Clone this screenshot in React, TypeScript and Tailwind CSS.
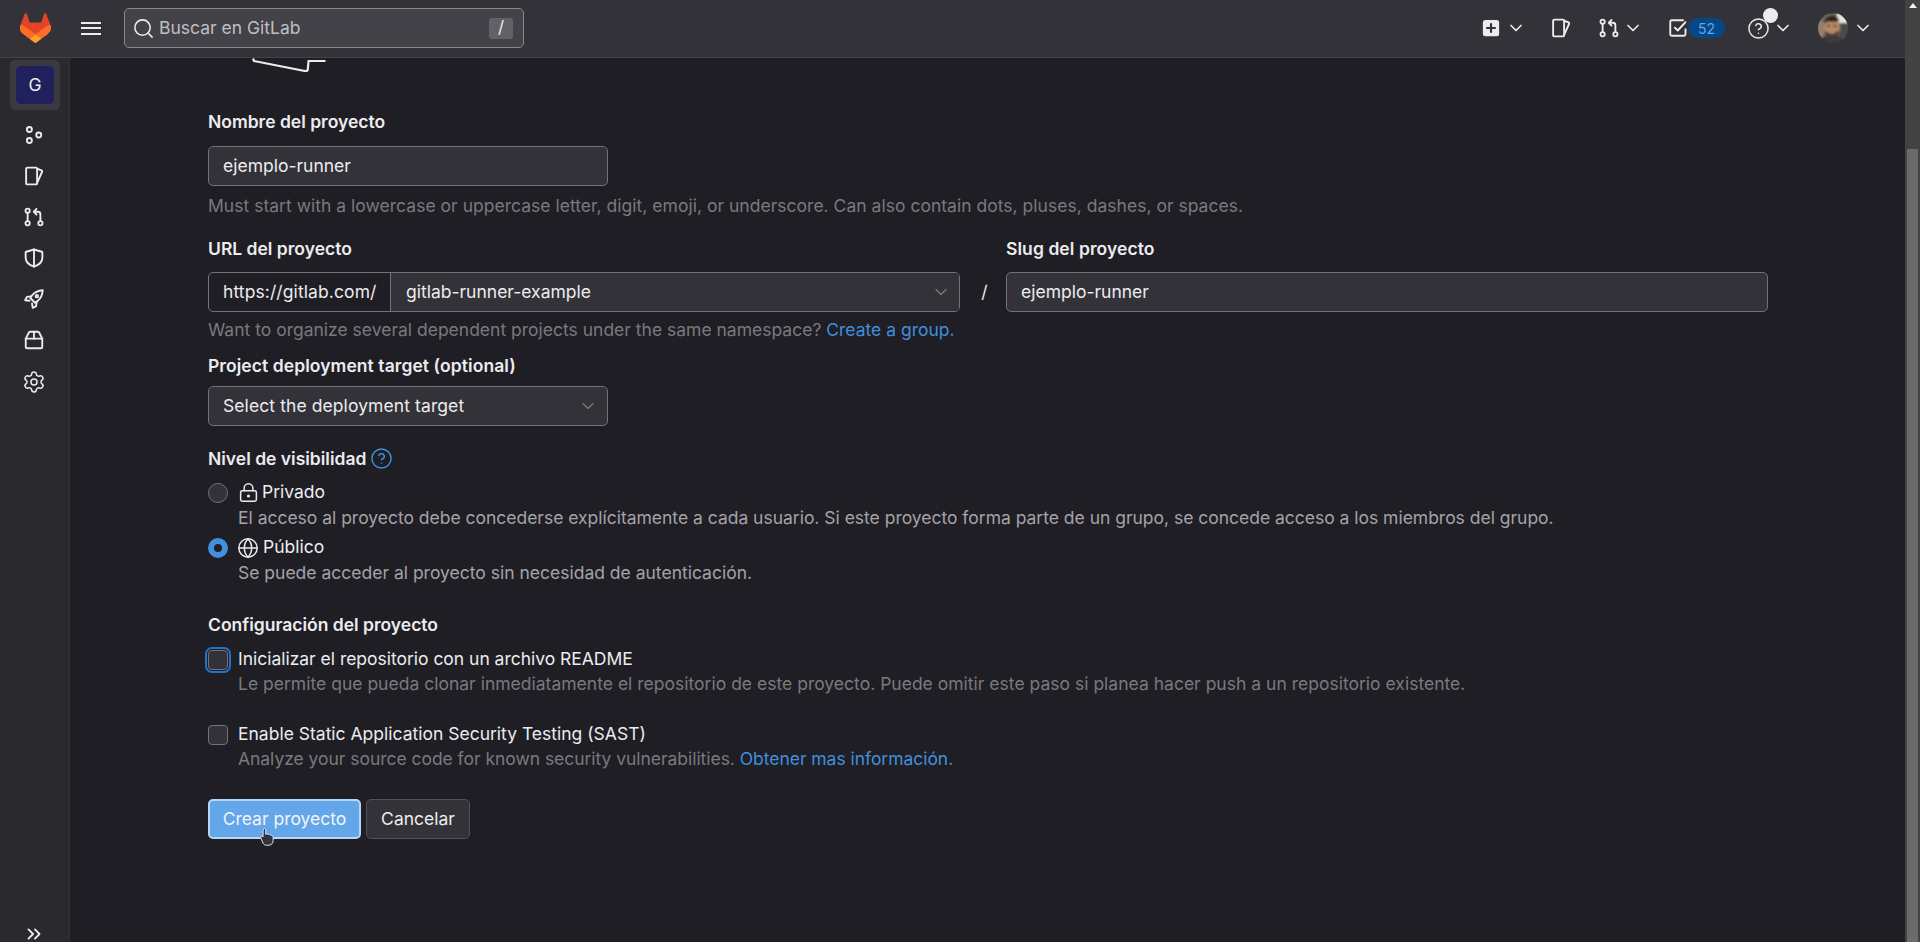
import { ChevronDown, ChevronsRight, CircleHelp, Globe, LockKeyhole, Search, Settings } from "lucide-react";
import type { ReactNode } from "react";

function Icon({ children, className = "" }: { children: ReactNode; className?: string }) {
  return (
    <svg
      viewBox="0 0 16 16"
      fill="none"
      stroke="currentColor"
      strokeWidth="1.5"
      strokeLinecap="round"
      strokeLinejoin="round"
      className={`h-5 w-5 shrink-0 ${className}`}
    >
      {children}
    </svg>
  );
}

const GroupIcon = () => (
  <Icon>
    <circle cx="4.3" cy="3.6" r="2" />
    <circle cx="4.3" cy="12.4" r="2" />
    <circle cx="11.8" cy="8" r="2" />
  </Icon>
);

const IssuesIcon = () => (
  <Icon>
    <path d="M2.700 1.300h6.800c.6 0 1 .4 1 1v11.400c0 .6-.4 1-1 1H2.700c-.6 0-1-.4-1-1V2.300c0-.6.4-1 1-1Z" />
    <path d="M10.500 2.200l3.500 1.300c.5.200.7.600.5 1.100l-4 8.900" />
  </Icon>
);

const MergeIcon = () => (
  <Icon>
    <circle cx="2.900" cy="3" r="1.700" />
    <circle cx="2.900" cy="13" r="1.700" />
    <circle cx="13.100" cy="13" r="1.700" />
    <path d="M2.900 4.700v6.600" />
    <path d="M13.100 11.300V5.800c0-1.200-.8-2-2-2H8.400" />
    <path d="M10 1.500 7.900 3.800 10 6.100" />
  </Icon>
);

const ShieldIcon = () => (
  <Icon>
    <path d="M8 1.200 14.200 3c.3.100.5.300.5.600v3.900c0 3.100-2.700 6-6.700 7.300-4-1.300-6.700-4.200-6.700-7.300V3.600c0-.3.200-.5.500-.6Z" />
    <path d="M8 1.200v13.600" />
  </Icon>
);

const RocketIcon = () => (
  <Icon>
    <path d="M15 1c-3.900.3-6.600 1.600-8.500 4L5 7.200 8.800 11l2.200-1.500C13.400 7.600 14.700 4.900 15 1Z" />
    <path d="M5.700 5.900 2.300 6.300.9 9l3.500.4" />
    <path d="M10.100 10.300l-.4 3.400-2.700 1.400-.6-3.500" />
    <circle cx="10.300" cy="5.700" r="1" />
  </Icon>
);

const PackageIcon = () => (
  <Icon>
    <path d="M1.400 6.900h13.200v6.700c0 .6-.4 1-1 1H2.400c-.6 0-1-.4-1-1Z" />
    <path d="M1.400 6.900 3.700 2.400c.2-.6.600-1 1.200-1h6.200c.6 0 1 .4 1.200 1l2.300 4.500" />
    <path d="M8 1.400v5.500" />
  </Icon>
);

const TodoIcon = () => (
  <Icon>
    <path d="M14 9v4c0 .7-.5 1.200-1.200 1.200H3c-.7 0-1.200-.5-1.200-1.200V3c0-.7.5-1.200 1.200-1.200h9" />
    <path d="m5.500 7.800 2.300 2.200 6.200-6.700" />
  </Icon>
);

function PlusSquare() {
  return (
    <svg viewBox="0 0 16 16" className="h-5 w-5 shrink-0">
      <rect x="1.500" y="1.500" width="13" height="13" rx="2" fill="#ececef" />
      <path d="M8 4.800v6.400M4.800 8h6.400" stroke="#333238" strokeWidth="1.700" strokeLinecap="round" />
    </svg>
  );
}

function Logo() {
  return (
    <svg viewBox="0 0 25 24" className="h-[30px] w-[31px]">
      <path
        d="m24.507 9.5-.034-.09L21.082.562a.896.896 0 0 0-1.694.091l-2.29 7.01H7.825L5.535.653a.898.898 0 0 0-1.694-.09L.451 9.411.416 9.5a6.297 6.297 0 0 0 2.09 7.278l.012.01.03.022 5.16 3.867 2.56 1.935 1.554 1.176a1.051 1.051 0 0 0 1.268 0l1.555-1.176 2.56-1.935 5.197-3.89.014-.01A6.297 6.297 0 0 0 24.507 9.5Z"
        fill="#E24329"
      />
      <path
        d="m24.507 9.5-.034-.09a11.44 11.44 0 0 0-4.56 2.051l-7.447 5.632 4.742 3.584 5.197-3.89.014-.01A6.297 6.297 0 0 0 24.507 9.5Z"
        fill="#FC6D26"
      />
      <path
        d="m7.707 20.677 2.56 1.935 1.555 1.176a1.051 1.051 0 0 0 1.268 0l1.555-1.176 2.56-1.935-4.743-3.584-4.755 3.584Z"
        fill="#FCA326"
      />
      <path
        d="M5.01 11.461a11.43 11.43 0 0 0-4.56-2.05L.416 9.5a6.297 6.297 0 0 0 2.09 7.278l.012.01.03.022 5.16 3.867 4.745-3.584-7.444-5.632Z"
        fill="#FC6D26"
      />
    </svg>
  );
}

function Avatar() {
  return (
    <svg viewBox="0 0 30 30" className="h-[30px] w-[30px] shrink-0">
      <defs>
        <clipPath id="avatar-clip">
          <circle cx="15" cy="15" r="15" />
        </clipPath>
        <filter id="avatar-blur">
          <feGaussianBlur stdDeviation="0.8" />
        </filter>
      </defs>
      <g clipPath="url(#avatar-clip)">
        <g filter="url(#avatar-blur)">
          <rect width="30" height="30" fill="#6b6558" />
          <rect x="19" y="-2" width="13" height="12" fill="#e6e5dc" />
          <rect x="-2" y="8" width="8" height="24" fill="#93806a" />
          <path d="M-2 32c3-8 9-10 16-10s13 3 18 10Z" fill="#3a3b3e" />
          <rect x="22" y="10" width="10" height="14" fill="#4a4a48" />
          <path d="M6 10C7 4 12 2 17 3c3 1 4 3 4 6-4-1-10-1-15 1Z" fill="#2c221c" />
          <ellipse cx="14" cy="15" rx="8" ry="8.500" fill="#b58a66" />
          <path d="M7 8c4-3 10-3 14 0-3 1-10 1-14 0Z" fill="#2c221c" />
          <ellipse cx="10.500" cy="13" rx="1.400" ry="0.900" fill="#2a1f18" />
          <ellipse cx="17" cy="13" rx="1.400" ry="0.900" fill="#2a1f18" />
          <path d="M7 18c3 3 11 3 14-1 0 5-3 7-7 7s-7-2-7-6Z" fill="#4d3729" />
          <path d="M10.500 19.500c2 1.200 5 1.200 7 0-1 1.800-6 1.800-7 0Z" fill="#e8e0d4" />
        </g>
      </g>
    </svg>
  );
}

function Chevron({ className = "" }: { className?: string }) {
  return <ChevronDown strokeWidth={2} className={`h-5 w-5 shrink-0 text-[#ececef] ${className}`} />;
}

function TopNav() {
  return (
    <header className="flex h-[58px] shrink-0 items-center border-b border-[#434248] bg-[#333238] pb-px text-[#ececef]">
      <div className="ml-5 shrink-0">
        <Logo />
      </div>
      <div className="ml-[30px] flex w-5 flex-col gap-[3.500px]">
        <span className="h-[2px] bg-[#ececef]" />
        <span className="h-[2px] bg-[#ececef]" />
        <span className="h-[2px] bg-[#ececef]" />
      </div>
      <div className="ml-[23px] flex h-10 w-[400px] items-center rounded-[5px] border border-[#89888d] bg-[#434248] pl-[7px] pr-[10px]">
        <Search strokeWidth={1.600} className="h-[23px] w-[23px] text-[#ececef]" />
        <span className="ml-[4px] flex-1 text-[17.500px] text-[#bfbfc3]">Buscar en GitLab</span>
        <kbd className="flex h-[21px] w-[24px] items-center justify-center rounded-[3px] bg-[#626168] font-[inherit] text-[17px] text-[#ececef]">
          /
        </kbd>
      </div>
      <nav className="ml-auto flex items-center pr-[32px]">
        <PlusSquare />
        <Chevron className="ml-[5px]" />
        <span className="ml-[25px]">
          <IssuesIcon />
        </span>
        <span className="ml-[28px]">
          <MergeIcon />
        </span>
        <Chevron className="ml-[4px]" />
        <span className="ml-[25px]">
          <TodoIcon />
        </span>
        <span className="flex h-5 w-[37px] items-center justify-center rounded-full bg-[#064787] text-[14px] text-[#63a6e9]">
          52
        </span>
        <span className="relative ml-[22px]">
          <CircleHelp strokeWidth={1.500} className="h-[23px] w-[23px]" />
          <span className="absolute left-4 -top-[9px] h-[15px] w-[15px] rounded-full bg-[#ececef]" />
        </span>
        <Chevron className="ml-[3px]" />
        <span className="ml-[25px]">
          <Avatar />
        </span>
        <Chevron className="ml-[5px]" />
      </nav>
    </header>
  );
}

function SideBar() {
  const items = [GroupIcon, IssuesIcon, MergeIcon, ShieldIcon, RocketIcon, PackageIcon];
  return (
    <aside className="flex w-[70px] shrink-0 flex-col border-r border-[#333238] bg-[#2a2a2e] text-[#ececef]">
      <div className="ml-[10px] mt-[2px] flex h-[50px] w-[50px] items-center justify-center rounded-[5px] bg-[#3a393f]">
        <span className="flex h-[38px] w-[38px] items-center justify-center rounded-[5px] bg-[#20205c] text-[17.500px]">
          G
        </span>
      </div>
      <div className="mt-[4px] flex flex-col">
        {items.map((Item, i) => (
          <span key={i} className="flex h-[41px] items-center justify-center pr-px">
            <Item />
          </span>
        ))}
        <span className="mt-px flex h-[41px] items-center justify-center pr-px">
          <Settings strokeWidth={1.500} className="h-6 w-6" />
        </span>
      </div>
      <div className="mt-auto flex h-[19px] justify-center pr-[2px]">
        <ChevronsRight strokeWidth={2} className="h-[22px] w-[22px] shrink-0" />
      </div>
    </aside>
  );
}

function Label({ children, className = "" }: { children: ReactNode; className?: string }) {
  return <div className={`h-[25px] text-[17.500px] font-semibold leading-[23px] text-[#ececef] ${className}`}>{children}</div>;
}

function Help({ children, className = "" }: { children: ReactNode; className?: string }) {
  return <div className={`h-[25px] text-[17.500px] leading-[23px] text-[#7a797f] ${className}`}>{children}</div>;
}

function Field({ value, className = "" }: { value: string; className?: string }) {
  return (
    <div className={`flex h-10 items-center rounded-[5px] border border-[#737278] bg-[#333238] px-[14px] text-[17.500px] text-[#ececef] ${className}`}>
      {value}
    </div>
  );
}

function Checkbox({ focused = false }: { focused?: boolean }) {
  return (
    <span
      className={`h-5 w-5 shrink-0 rounded-[4px] border border-[#737278] bg-[#333238] ${
        focused ? "shadow-[0_0_0_1px_#1f1e24,0_0_0_3px_#1f75cb]" : ""
      }`}
    />
  );
}

function HandCursor() {
  return (
    <svg viewBox="0.5 1 14.500 18.500" className="absolute left-[50px] top-[27px] h-[18px] w-[15px]">
      <path
        d="M4.500 1.500c.8 0 1.400.6 1.400 1.400v4.500c.8-.5 1.800-.4 2.300.3.700-.4 1.700-.2 2.100.5.800-.3 1.700.1 2 .9.500-.1 1.200.4 1.200 1.400v3.500c0 2.600-1.800 4.700-4.400 4.700H6.500c-1.500 0-2.600-.8-3.300-2.100L1 11.600c-.4-.8-.2-1.600.5-2 .6-.3 1.300-.1 1.700.4V2.900c0-.8.600-1.400 1.300-1.400Z"
        fill="#2e3342"
        stroke="#e8e8ec"
        strokeWidth="1"
      />
    </svg>
  );
}

export default function App() {
  return (
    <div className="flex h-[942px] w-full overflow-hidden bg-[#1f1e24] font-['Inter',sans-serif]">
      <div className="flex min-w-0 flex-1 flex-col">
        <TopNav />
        <div className="flex min-h-0 flex-1">
          <SideBar />
          <main className="min-w-0 flex-1 pl-[138px] pr-[137px]">
            <svg viewBox="0 0 74 14" className="ml-[44px] block h-[14px] w-[74px]" fill="none">
              <path d="M1 0.500 2 3 53 13c2 .3 2.600-.3 2.800-1.500L56.500 3h17" stroke="#ececef" strokeWidth="2.200" strokeLinejoin="round" />
            </svg>

            <Label className="mt-[38px]">Nombre del proyecto</Label>
            <Field value="ejemplo-runner" className="mt-[11px] w-[400px]" />
            <Help className="mt-2 tracking-[0.02px]">
              Must start with a lowercase or uppercase letter, digit, emoji, or underscore. Can also contain dots, pluses, dashes, or spaces.
            </Help>

            <div className="mt-[18px] flex">
              <div className="w-[752px]">
                <Label>URL del proyecto</Label>
              </div>
              <div className="ml-[46px]">
                <Label className="tracking-[0.07px]">Slug del proyecto</Label>
              </div>
            </div>
            <div className="mt-[10px] flex items-center">
              <div className="flex h-10 w-[752px] overflow-hidden rounded-[5px] border border-[#737278] text-[17.500px] text-[#ececef]">
                <span className="flex w-[182px] shrink-0 items-center border-r border-[#737278] pl-[14px] tracking-[0.1px]">https://gitlab.com/</span>
                <span className="flex flex-1 items-center justify-between bg-[#333238] pl-[15px] pr-2">
                  gitlab-runner-example
                  <ChevronDown strokeWidth={1.500} className="h-5 w-5 text-[#7a797f]" />
                </span>
              </div>
              <span className="w-[46px] pl-[3px] text-center text-[17.500px] text-[#ececef]">/</span>
              <Field value="ejemplo-runner" className="flex-1" />
            </div>
            <Help className="mt-1.5">
              Want to organize several dependent projects under the same namespace? <a className="text-[#428fdc]">Create a group.</a>
            </Help>

            <Label className="mt-[11px] tracking-[0.07px]">Project deployment target (optional)</Label>
            <div className="mt-[7px] flex h-10 w-[400px] items-center justify-between rounded-[5px] border border-[#737278] bg-[#333238] pl-[14px] pr-[9px] text-[17.500px] tracking-[0.09px] text-[#ececef]">
              Select the deployment target
              <ChevronDown strokeWidth={1.500} className="h-5 w-5 text-[#7a797f]" />
            </div>

            <Label className="mt-[21px] flex items-center pb-[2px]">
              Nivel de visibilidad
              <CircleHelp strokeWidth={1.500} className="ml-[4px] h-[23px] w-[23px] text-[#428fdc]" />
            </Label>

            <div className="mt-2 flex h-[25px] items-center text-[17.500px] text-[#ececef]">
              <span className="h-5 w-5 shrink-0 rounded-full border border-[#737278] bg-[#333238]" />
              <LockKeyhole strokeWidth={1.700} className="ml-[10px] h-[21px] w-[21px]" />
              <span className="ml-[3px]">Privado</span>
            </div>
            <div className="ml-[30px] h-[25px] text-[17.500px] leading-[25px] tracking-[-0.015px] text-[#a4a3a8]">
              El acceso al proyecto debe concederse explícitamente a cada usuario. Si este proyecto forma parte de un grupo, se concede acceso a los miembros del grupo.
            </div>
            <div className="mt-[5px] flex h-[25px] items-center text-[17.500px] text-[#ececef]">
              <span className="flex h-5 w-5 shrink-0 items-center justify-center rounded-full bg-[#428fdc]">
                <span className="h-2 w-2 rounded-full bg-[#1f1e24]" />
              </span>
              <Globe strokeWidth={1.600} className="ml-[9px] h-[22px] w-[22px]" />
              <span className="ml-[4px]">Público</span>
            </div>
            <div className="ml-[30px] h-[25px] text-[17.500px] leading-[25px] text-[#a4a3a8]">
              Se puede acceder al proyecto sin necesidad de autenticación.
            </div>

            <Label className="mt-[28px]">Configuración del proyecto</Label>
            <div className="mt-[9px] flex h-[25px] items-center gap-2.5 text-[17.500px] text-[#ececef]">
              <Checkbox focused />
              <span className="tracking-[-0.02px]">Inicializar el repositorio con un archivo README</span>
            </div>
            <Help className="ml-[30px] tracking-[0.01px]">
              Le permite que pueda clonar inmediatamente el repositorio de este proyecto. Puede omitir este paso si planea hacer push a un repositorio existente.
            </Help>
            <div className="mt-[25px] flex h-[25px] items-center gap-2.5 text-[17.500px] text-[#ececef]">
              <Checkbox />
              Enable Static Application Security Testing (SAST)
            </div>
            <Help className="ml-[30px] tracking-[-0.04px]">
              Analyze your source code for known security vulnerabilities. <a className="text-[#428fdc]">Obtener mas información.</a>
            </Help>

            <div className="mt-[27px] flex gap-[5px] text-[17.500px]">
              <button className="relative h-10 w-[153px] rounded-[5px] border-2 border-[#b5d6f4] bg-[#63a6e9] text-[#f4f4f6]">
                Crear proyecto
                <HandCursor />
              </button>
              <button className="h-10 w-[104px] rounded-[5px] border border-[#535158] bg-[#333238] text-[#ececef]">Cancelar</button>
            </div>
          </main>
        </div>
      </div>
      <div className="flex w-[15px] shrink-0 flex-col bg-[#434343]">
        <div className="flex h-[149px] justify-center pt-[3px]">
          <svg viewBox="0 0 8 5" className="h-[5px] w-[8px]">
            <path d="M4 0 8 5H0Z" fill="#f0f0f0" />
          </svg>
        </div>
        <div className="ml-[2px] w-[11px] flex-1 bg-[#6b6b6b]" />
      </div>
    </div>
  );
}
